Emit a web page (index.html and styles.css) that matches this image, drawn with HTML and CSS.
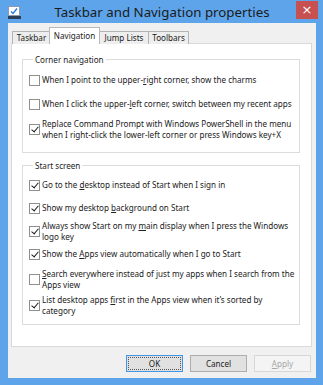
FILE: index.html
```html
<!DOCTYPE html>
<html>
<head>
<meta charset="utf-8">
<link rel="stylesheet" href="styles.css">
</head>
<body>
<div class="window">
  <div class="titlebar">
    <svg class="app-icon" width="13" height="13" viewBox="0 0 13 13">
      <rect x="0.5" y="0.5" width="11" height="9" fill="#fff" stroke="#8a9bb0"/>
      <path d="M3 5.5 L5 7.5 L9 2.5" fill="none" stroke="#2a7be0" stroke-width="1.4"/>
      <rect x="0" y="10" width="13" height="3" fill="#2d3e57"/>
    </svg>
    <div class="title">Taskbar and Navigation properties</div>
    <div class="close">×</div>
  </div>
  <div class="client">
    <div class="tabs">
      <div class="tab t1">Taskbar</div>
      <div class="tab active">Navigation</div>
      <div class="tab t3">Jump Lists</div>
      <div class="tab t4">Toolbars</div>
    </div>
    <div class="panel">
      <div class="group g1">
        <div class="group-title">Corner navigation</div>
        <div class="row r1"><span class="cb"></span><span class="lbl">When I point to the upper-<u>r</u>ight corner, show the charms</span></div>
        <div class="row r2"><span class="cb"></span><span class="lbl">When I click the upper-<u>l</u>eft corner, switch between my recent apps</span></div>
        <div class="row r3"><span class="cb on"></span><span class="lbl">Replace Command Prompt with Windows PowerShell in the menu<br>when I right-click the lower-left corner or press Windows key+X</span></div>
      </div>
      <div class="group g2">
        <div class="group-title">Start screen</div>
        <div class="row s1"><span class="cb on"></span><span class="lbl">Go to the <u>d</u>esktop instead of Start when I sign in</span></div>
        <div class="row s2"><span class="cb on"></span><span class="lbl">Show my desktop <u>b</u>ackground on Start</span></div>
        <div class="row s3"><span class="cb on"></span><span class="lbl">Always show Start on my <u>m</u>ain display when I press the Windows<br>logo key</span></div>
        <div class="row s4"><span class="cb on"></span><span class="lbl">Show the <u>A</u>pps view automatically when I go to Start</span></div>
        <div class="row s5"><span class="cb"></span><span class="lbl"><u>S</u>earch everywhere instead of just my apps when I search from the<br>Apps view</span></div>
        <div class="row s6"><span class="cb on"></span><span class="lbl">List desktop apps <u>f</u>irst in the Apps view when it’s sorted by<br>category</span></div>
      </div>
    </div>
    <div class="buttons">
      <div class="btn default"><span class="focus">OK</span></div>
      <div class="btn">Cancel</div>
      <div class="btn disabled"><u>A</u>pply</div>
    </div>
  </div>
</div>
</body>
</html>
```
FILE: styles.css
```css
html, body { margin: 0; padding: 0; }
body { width: 323px; height: 385px; overflow: hidden; font-family: "Noto Sans", "Open Sans", sans-serif; }
.window {
  width: 323px; height: 385px; box-sizing: border-box;
  background: #5ea4ea;
  padding: 0 7px 7px 8px;
  display: flex; flex-direction: column;
}
.titlebar {
  height: 23px; display: flex; align-items: flex-start; position: relative;
}
.app-icon { margin-top: 6px; margin-left: 0; flex: none; }
.title {
  flex: 1; text-align: center; font-size: 13.3px; line-height: 25px; color: #1b1b1b;
  margin-left: -13px; margin-right: -20px;
}
.close {
  width: 22px; height: 18px; margin-top: 1px; margin-right: -2px; background: #c75050; color: #fff;
  font-size: 13px; line-height: 17px; text-align: center; flex: none; font-family: "DejaVu Sans", sans-serif;
}
.client {
  flex: 1; background: #f0f0f0; display: flex; flex-direction: column;
  padding: 5px 4px 0 3px;
  font-size: 8.1px; color: #222;
}
.tabs { display: flex; align-items: flex-end; height: 16px; padding-left: 1px; position: relative; z-index: 1; }
.tab {
  height: 13px; line-height: 12px; box-sizing: border-box; padding: 0;
  border: 1px solid #b4b4b4; border-bottom: none; background: #eeeeee; margin-right: -1px;
  color: #222; white-space: nowrap; text-align: center;
}
.t1 { width: 39px; }
.t3 { width: 50px; }
.t4 { width: 41px; }
.tab.active {
  height: 17px; line-height: 15px; background: #fff; margin: 0 -1px 0 -1px; width: 51px;
  position: relative; z-index: 2; border-color: #b9b9b9;
}
.panel {
  height: 304px; box-sizing: border-box; background: #fff; border: 1px solid #d9d9d9;
  margin-top: -1px; padding: 10px 11px 0 10px;
}
.group {
  border: 1px solid #dcdcdc; box-sizing: border-box; padding: 0 4px 0 6px;
}
.g1 { height: 94px; margin-top: 5px; }
.g2 { height: 160px; margin-top: 12px; }
.group-title {
  margin-top: -6px; margin-left: 4px; background: #fff; width: fit-content; padding: 0 2px;
  line-height: 11px; height: 11px; color: #222;
}
.row { display: flex; align-items: center; line-height: 10.6px; }
.cb {
  width: 11px; height: 11px; box-sizing: border-box; border: 1px solid #8f8f8f; background: #fff;
  flex: none; margin-right: 2px; position: relative;
}
.cb.on::after {
  content: ""; position: absolute; left: 3px; top: 0px; width: 3px; height: 6px;
  border: solid #1a1a1a; border-width: 0 1.6px 1.6px 0; transform: rotate(40deg);
}
.lbl { white-space: nowrap; }
.r1 { margin-top: 10px; }
.r2 { margin-top: 13px; }
.r3 { margin-top: 9px; }
.s1 { margin-top: 9px; }
.s2 { margin-top: 12px; }
.s3 { margin-top: 7px; }
.s4 { margin-top: 7px; }
.s5 { margin-top: 9px; }
.s6 { margin-top: 5px; }
u { text-decoration-thickness: 1px; text-underline-offset: 1px; }
.buttons { display: flex; justify-content: flex-end; gap: 7px; margin-top: 8px; padding-right: 1px; }
.btn {
  width: 57px; height: 17px; box-sizing: border-box; border: 1px solid #adadad; background: #e1e1e1;
  text-align: center; line-height: 15px; color: #222; font-size: 8.1px;
}
.btn.default { border-color: #3f95e8; padding: 1px; line-height: 13px; }
.btn.default .focus { display: block; height: 13px; border: 1px dotted #555; box-sizing: border-box; line-height: 11px; }
.btn.disabled { background: #f4f4f4; border-color: #d7d7d7; color: #a6a6a6; }
```
